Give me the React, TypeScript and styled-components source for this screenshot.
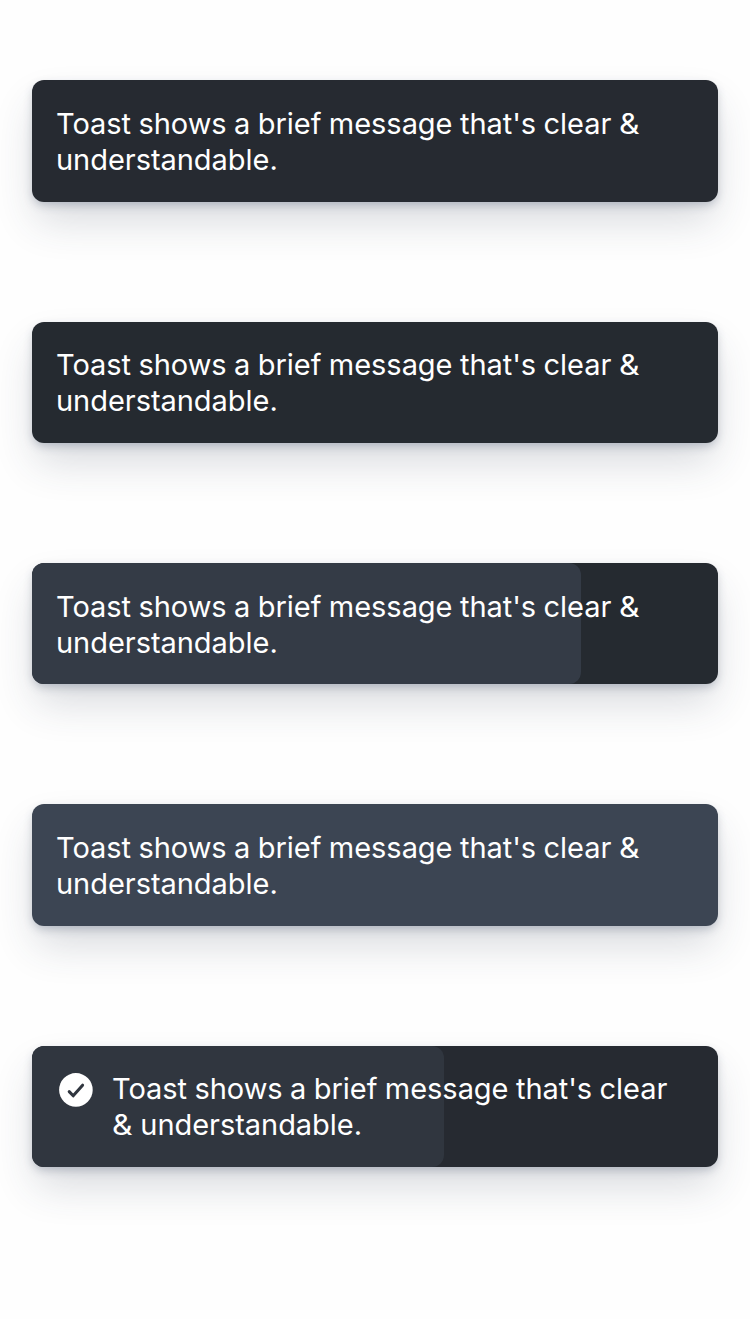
import React from "react";
import styled, { createGlobalStyle } from "styled-components";

const GlobalStyle = createGlobalStyle`
  * { box-sizing: border-box; }
  body { margin: 0; background: #fefefe; font-family: Inter, "Liberation Sans", sans-serif; }
`;

const Page = styled.main`
  display: flex;
  flex-direction: column;
  gap: 120px;
  min-height: 1319px;
  padding: 80.2px 32px 0;
`;

const ToastCard = styled.div<{ $bg: string; $fill?: string; $progress?: number }>`
  display: flex;
  gap: 16px;
  height: 121.4px;
  padding: 25.6px 24px 0;
  border-radius: 12px;
  color: #fff;
  background: ${(p) => p.$bg};
  box-shadow: 0 4px 10px -1px rgba(50, 65, 95, 0.28), 0 22px 42px -4px rgba(50, 60, 80, 0.19);
  position: relative;
  isolation: isolate;

  &::before {
    content: "";
    position: absolute;
    z-index: -1;
    inset: 0 auto 0 0;
    width: ${(p) => p.$progress ?? 0}%;
    border-radius: 12px;
    background: ${(p) => p.$fill ?? "transparent"};
  }
`;

const Message = styled.p`
  margin: 0;
  font-size: 29px;
  font-weight: 400;
  line-height: 36px;
  letter-spacing: -0.04px;
  word-spacing: -0.65px;
  white-space: nowrap;
`;

const Ampersand = styled.span`
  display: inline-block;
  margin-right: 2.2px;
  transform: scaleX(1.1);
  transform-origin: left;
`;

const CheckIcon = styled.svg`
  width: 40px;
  height: 36px;
  flex: none;
`;

export default function App() {
  const text = <>Toast shows a brief message that's clear <Ampersand>&amp;</Ampersand><br />understandable.</>;
  return (
    <>
      <GlobalStyle />
      <Page>
        <ToastCard $bg="#262a31"><Message>{text}</Message></ToastCard>
        <ToastCard $bg="#252a30"><Message>{text}</Message></ToastCard>
        <ToastCard $bg="#252a30" $fill="#343b46" $progress={80}><Message>{text}</Message></ToastCard>
        <ToastCard $bg="#3c4553"><Message>{text}</Message></ToastCard>
        <ToastCard $bg="#262a31" $fill="#30363f" $progress={60}>
          <CheckIcon viewBox="0 0 40 36" fill="none">
            <circle cx="19.9" cy="18.9" r="16.8" fill="#fff" />
            <path d="M13.2 20.6l4 4.2L26.6 14.2" stroke="#30363f" strokeWidth="3" strokeLinecap="round" strokeLinejoin="round" />
          </CheckIcon>
          <Message>Toast shows a brief message that's clear<br /><Ampersand>&amp;</Ampersand> understandable.</Message>
        </ToastCard>
      </Page>
    </>
  );
}
